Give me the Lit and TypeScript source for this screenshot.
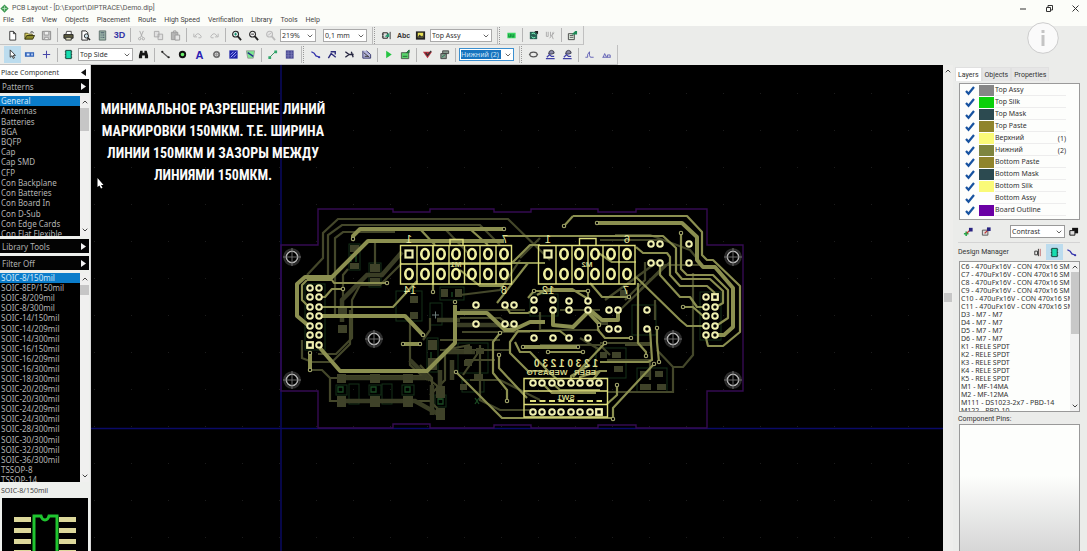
import { LitElement, html, svg, css } from "lit";
import { customElement, state } from "lit/decorators.js";
import { classMap } from "lit/directives/class-map.js";

const icon = (name: string) => html`<svg class="icon" viewBox="0 0 12 12" aria-hidden="true">${ICONS[name]}</svg>`;

const ICONS: Record<string, unknown> = {
  logo: svg`<path d="M6 0.5 11.5 6 6 11.5 0.5 6Z" fill="#3f9a52"/><path d="M3 6h6M6 3v6" stroke="#bfe6c4" stroke-width="1"/>`,
  file: svg`<path d="M3 1.5h4l2.500 2.500v7H3Z" fill="#fff" stroke="#333"/><path d="M7 1.500v2.500h2.500" fill="none" stroke="#333"/>`,
  open: svg`<path d="M1 10V3.500h3l1 1h4V6" fill="#d8cf63" stroke="#55501a"/><path d="M1 10 3 6h8.500L9.500 10Z" fill="#8b8a2c" stroke="#33310e"/><path d="M7 2.500q2-1.500 3.500 0.500" fill="none" stroke="#222"/>`,
  save: svg`<path d="M1.500 1.500h9v9h-9Z" fill="#c9c9c9" stroke="#888"/><path d="M3.500 1.500h5v4h-5ZM4 8h4v2.500H4Z" fill="#eee" stroke="#999"/>`,
  print: svg`<path d="M3 5 4 1.500h5L9 5" fill="#fff" stroke="#444"/><path d="M1 5h10v4H1Z" fill="#5c5c3c" stroke="#222"/><path d="M3 8h6v3H3Z" fill="#d8d8b8" stroke="#333"/>`,
  preview: svg`<path d="M2 1h4.500l2 2v8H2Z" fill="#fff" stroke="#222"/><circle cx="7" cy="6.500" r="2.300" fill="#cfe3ea" stroke="#222"/><path d="m8.500 8.500 2.500 2.500" stroke="#222" stroke-width="1.500"/>`,
  calc: svg`<path d="M2.500 1h7v10h-7Z" fill="#9cb5a9" stroke="#5d6f6a"/><path d="M4 3h4M4 5.500h1M6 5.500h2M4 8h1M6 8h2" stroke="#456"/>`,
  cut: svg`<path d="m4 1 3 7M8 1 5 8" stroke="#aaa" fill="none"/><circle cx="4" cy="9.500" r="1.300" fill="none" stroke="#aaa"/><circle cx="8" cy="9.500" r="1.300" fill="none" stroke="#aaa"/>`,
  copy: svg`<path d="M1.500 1.500h5v6h-5ZM5.500 4.500h5v6h-5Z" fill="#e0e0e0" stroke="#aaa"/>`,
  paste: svg`<path d="M1.500 2.500h7v8h-7Z" fill="#b5b5b5" stroke="#999"/><path d="M4 1h2.500v2H4ZM5.500 5.500h5v5.500h-5Z" fill="#e4e4e4" stroke="#999"/>`,
  undo: svg`<path d="M3 7Q6 2 9 5.500T7 8.500M2 4v3.500h3.500" fill="none" stroke="#b4b4b4"/>`,
  redo: svg`<path d="M9 7Q6 2 3 5.500T5 8.500M10 4v3.500H6.500" fill="none" stroke="#b4b4b4"/>`,
  zoomIn: svg`<circle cx="5" cy="4.500" r="3.200" fill="#e6f0ee" stroke="#222" stroke-width="1.200"/><path d="m7.500 7 3.500 4" stroke="#222" stroke-width="2"/><path d="M3.500 4.500h3M5 3v3" stroke="#086"/>`,
  zoomOut: svg`<circle cx="5" cy="4.500" r="3.200" fill="#f3f3f3" stroke="#222" stroke-width="1.200"/><path d="m7.500 7 3.500 4" stroke="#222" stroke-width="2"/><path d="M3.500 4.500h3" stroke="#222"/>`,
  zoomOff: svg`<circle cx="5" cy="4.500" r="3.200" fill="#e6e6e6" stroke="#bbb" stroke-width="1.200"/><path d="m7.500 7 3.500 4" stroke="#bbb" stroke-width="2"/><path d="m3.500 5.500 3-2" stroke="#bbb"/>`,
  place: svg`<path d="M2 3h5v6H2Z" fill="#ddd" stroke="#222"/><path d="M1 4.500h2M1 7.500h2M10 2v8" stroke="#333"/><path d="m4 7 5-4v5Z" fill="#2a9c74"/>`,
  image: svg`<path d="M1 1.500h10v9H1Z" fill="#222"/><path d="M3 3h6v5H3Z" fill="#e7e056"/><path d="m3 8 2-3 2 2 1-1 1 2Z" fill="#333"/>`,
  chip3: svg`<path d="M1.500 3h9v6h-9Z" fill="#37d65f"/><path d="M3 4.500v3h2v-3M6.500 4.500v3h2v-3" fill="none" stroke="#11863a"/>`,
  refresh: svg`<path d="M2 2h8v8H2Z" fill="#276154"/><path d="M4 4q3-2 4 1M8 8Q5 10 4 7" fill="none" stroke="#7dffc0"/><path d="M7 1h4v4Z" fill="#222"/>`,
  grayx: svg`<path d="M1.500 2v5h2V2M6 2v5M9 2q-3 4 0 8M5 9l5-6" fill="none" stroke="#aaa"/>`,
  export: svg`<path d="M1.500 4h6.500v6.500H1.500Z" fill="#dce8dc" stroke="#444"/><path d="M3 6h4M3 8h4" stroke="#555"/><path d="M5 5 9 1h2v4Z" fill="#1d8a56"/>`,
  arrow: svg`<path d="M3.500 1v8l2-1.700 1.300 3 1.300-.600L6.800 7h2.400Z" fill="#fff" stroke="#222" stroke-width=".9"/>`,
  comp: svg`<path d="M1 3.500h10v5H1Z" fill="#3567bb"/><path d="M3 5h3v2H3ZM8 5h1.500v2H8Z" fill="#dce8ff"/>`,
  origin: svg`<path d="M6 2v8M2 6h8" stroke="#4747a8" stroke-width="1.100"/>`,
  ic: svg`<path d="M3 1.500h6v9H3Z" fill="#16ddb0" stroke="#143f35"/><path d="M2 3h1M2 6h1M2 9h1M9 3h1M9 6h1M9 9h1" stroke="#143f35"/>`,
  find: svg`<path d="M2.500 2h2.500v2h2V2h2.500l1.500 5v3H7.500V7h-3v3H1V7Z" fill="#161616"/>`,
  track: svg`<path d="m2 3 7 6" stroke="#555" stroke-width="1.200"/><circle cx="2.500" cy="3" r="1.200" fill="#222"/><circle cx="9.500" cy="9" r="1.200" fill="#222"/>`,
  via: svg`<circle cx="6" cy="6" r="3" fill="#6df06d" stroke="#111" stroke-width="2"/>`,
  hole: svg`<circle cx="6" cy="6" r="3" fill="#ccc" stroke="#666" stroke-width="1.700"/><path d="M6 2v8M2 6h8" stroke="#888" stroke-width=".6"/>`,
  pour: svg`<path d="M1.500 1.500h9v9h-9Z" fill="#1b20a8"/><path d="m3 9 6-6M3 6l3-3M6 9l3-3" stroke="#aeb6ff"/>`,
  shape: svg`<path d="M1.500 2h9L9 10H3Z" fill="#7ce890" stroke="#9a9a9a"/><path d="m3 4 6 4" stroke="#22308a" stroke-width="1.500"/>`,
  dim: svg`<path d="m3 9 6-6" stroke="#2e8d5c"/><path d="M1.500 8h3v3h-3ZM8 1.500h3v3H8Z" fill="#2ea66b"/>`,
  grid: svg`<path d="M2 1.500h8.500v9H2Z" fill="#4a4a94"/><path d="M4.500 2v8M8 2v8M2 4.500h8M2 7.500h8" stroke="#8d8dc8" stroke-width=".6"/>`,
  route1: svg`<path d="m1.500 3 3 1.500 2 3 4 1.500" fill="none" stroke="#3434ac" stroke-width="1.400"/><circle cx="10" cy="9" r="1.200" fill="#3434ac"/>`,
  route2: svg`<path d="m1.500 10 3-5 5 4M4 3h5v3" fill="none" stroke="#2c2c7c" stroke-width="1.500"/>`,
  route3: svg`<path d="m1.500 3 4 3h5M1.500 9l4-3M8 3l2 6" fill="none" stroke="#24243e" stroke-width="1.400"/>`,
  route4: svg`<path d="M2 2v8h8.500V6L6 2" fill="#b5b5dc" stroke="#33336a"/><path d="m3 4 6 5M4 8h4" stroke="#333"/>`,
  play: svg`<path d="m3.500 2 6 4-6 4Z" fill="#25c443"/>`,
  auto: svg`<path d="M1.500 4h8v6.500h-8Z" fill="#59d46b" stroke="#4c5a4c"/><path d="M3 8h5M7 4l3-3v3Z" stroke="#263" fill="#285"/>`,
  drc: svg`<path d="M1 3h10L6 10Z" fill="#b9303e"/><path d="m4 4 2 3 4-5" fill="none" stroke="#333" stroke-width="1.300"/>`,
  net: svg`<path d="M4 2h6.500v3H4ZM2 5h6v5.500H2Z" fill="#8a9a8e" stroke="#444"/><path d="m3 9 4-3" stroke="#1b7c50"/>`,
  ring: svg`<path d="M2 6q0-2.500 4-2.500T10 6 6 8.500 2 6Z" fill="none" stroke="#555" stroke-width="1.300"/><path d="M1 6h1.500M9.500 6H11" stroke="#555"/>`,
  diff: svg`<path d="M4 5.500q0-4 3-4t3 3L7.500 5.500Z" fill="#8c8caa" stroke="#353545"/><path d="M1 10.500h9.500M2 9l3-3 2 2h3" fill="none" stroke="#4040a8" stroke-width="1.300"/>`,
  wave: svg`<path d="M1.500 9h2.500V6l2-3v4l1 2h3.500" fill="none" stroke="#5d5db4"/>`,
  wave2: svg`<path d="M1.500 9h9M2.500 9 4 5l2 4M7 9V6.500h3V9" fill="none" stroke="#5d5db4"/>`,
  brush: svg`<path d="M3.500 6v5M1 8.500h5" stroke="#27a84b" stroke-width="1.800"/><path d="m4 8 3-3" stroke="#b33" stroke-width="1.400"/><path d="M6.500 2h4v4h-4Z" fill="#2b2482"/>`,
  brush2: svg`<path d="M1.500 4.500h6V10h-6Z" fill="#ddd" stroke="#555"/><path d="m4 8 3-3" stroke="#b33" stroke-width="1.400"/><path d="M6.500 1.500h4v4h-4Z" fill="#2b2482"/>`,
  stack: svg`<path d="M4.500 2h6.500v6H4.500Z" fill="#111"/><path d="M2 5h5.500v5H2Z" fill="#ddd" stroke="#111"/>`,
  diode: svg`<path d="M7 2v8M3 4.500h3v4H3Z" fill="none" stroke="#333"/><path d="M9 2v8" stroke="#b66"/>`,
};

type Tool = string | { b: string; cls?: string; on?: boolean } | { sel: string; cls: string; label: string };

const ROW1: Tool[] = [
  "file", "open", "save", "|", "print", "preview", "calc", { b: "3D", cls: "t3d" }, "|", "cut", "copy", "paste", "|",
  "undo", "redo", "|", "zoomIn", "zoomOut", "zoomOff",
  { sel: "219%", cls: "w36", label: "Zoom" }, { sel: "0,1 mm", cls: "w44", label: "Grid size" },
  "||", "place", { b: "Abc", cls: "abc" }, "image", { sel: "Top Assy", cls: "w62", label: "Drawing layer" },
  "||", "chip3", "|", "refresh", "grayx", "|", "export",
];
const ROW2: Tool[] = [
  { b: "arrow", on: true }, "comp", "origin", "|", "ic", { sel: "Top Side", cls: "w56", label: "Side" }, "find", "|",
  "track", "via", { b: "A", cls: "bigA" }, "hole", "pour", "shape", "|", "dim", "grid", "||",
  "route1", "route2", "route3", "route4", "|", "play", "auto", "|", "drc", "net", "|",
  { sel: "Нижний (2)", cls: "w56 active", label: "Route layer" }, "||", "ring", "diff", "diff", "|", "wave", "wave2",
];

const chev = html`<svg class="chev" viewBox="0 0 6 4" aria-hidden="true"><path d="m.7.7 2.300 2.300L5.300.7" fill="none" stroke="#666"/></svg>`;
const combo = (value: string, cls: string, label: string) =>
  html`<span class="combo ${cls}"><select aria-label=${label}><option>${value}</option></select>${chev}</span>`;

const renderTool = (t: Tool) => {
  if (t === "|") return html`<span class="sep"></span>`;
  if (t === "||") return html`<span class="grip"></span>`;
  if (typeof t === "string") return html`<button class="tool" aria-label=${t}>${icon(t)}</button>`;
  if ("sel" in t) return combo(t.sel, t.cls, t.label);
  return html`<button class="tool ${t.cls ?? ""} ${t.on ? "on" : ""}" aria-label=${t.b}>${t.cls ? t.b : icon(t.b)}</button>`;
};

@customElement("pcb-toolbar")
class PcbToolbar extends LitElement {
  static styles = css`
    :host { display: block; color: #333; }
    .row { display: flex; width: max-content; height: 19px; align-items: center; padding-left: 4px; padding-right: 2px;
      border-bottom: 1px solid #c4c4c4; border-right: 1px solid #c0c0c0; box-sizing: border-box; }
    .row + .row { height: 20px; }
    .tool { width: 17px; height: 17px; padding: 0; border: 0; background: none; display: flex; align-items: center; justify-content: center;
      font: bold 8px "Liberation Sans", sans-serif; color: #333; }
    .on { background: #bcdcee; }
    .t3d { color: #3434a6; font-size: 9px; }
    .abc { font-size: 7px; }
    .bigA { color: #2a22b4; font-size: 11px; }
    .icon { width: 11px; height: 11px; }
    .sep { width: 1px; height: 14px; background: #b5b5b5; margin: 0 2px; }
    .grip { width: 1px; height: 17px; border-left: 1px solid #bbb; border-right: 1px dotted #999; margin: 0 3px; }
    .combo { position: relative; display: block; height: 13px; margin: 0 2px 0 1px; }
    .w36 { width: 36px; margin-right: 6px; } .w44 { width: 44px; } .w62 { width: 62px; } .w56 { width: 55px; }
    select { appearance: none; width: 100%; height: 13px; border: 1px solid #aaa; border-radius: 0; background: #fff; padding: 0 1px;
      font: 7px "Noto Sans", sans-serif; color: #333; display: block; }
    .chev { position: absolute; right: 3px; top: 5px; width: 6px; height: 4px; pointer-events: none; }
    .active select { border-color: #3b8fd0; background: linear-gradient(#1874bf, #1874bf) 1px 1px / 40px 9px no-repeat #fff; color: #cfe4f7; }
  `;
  render() {
    return html`<div class="row" role="toolbar">${ROW1.map(renderTool)}</div>
      <div class="row" role="toolbar">${ROW2.map(renderTool)}</div>`;
  }
}

const PATTERNS = ["General", "Antennas", "Batteries", "BGA", "BQFP", "Cap", "Cap SMD", "CFP", "Con Backplane", "Con Batteries",
  "Con Board In", "Con D-Sub", "Con Edge Cards", "Con Flat Flexible"];
const PARTS = ["SOIC-8/150mil", "SOIC-8EP/150mil", "SOIC-8/209mil", "SOIC-8/300mil", "SOIC-14/150mil", "SOIC-14/209mil",
  "SOIC-14/300mil", "SOIC-16/150mil", "SOIC-16/209mil", "SOIC-16/300mil", "SOIC-18/300mil", "SOIC-20/209mil", "SOIC-20/300mil",
  "SOIC-24/209mil", "SOIC-24/300mil", "SOIC-28/300mil", "SOIC-30/300mil", "SOIC-32/300mil", "SOIC-36/300mil", "TSSOP-8", "TSSOP-14"];

const up = html`<svg class="sa" viewBox="0 0 6 4"><path d="m.7 3.300L3 1l2.300 2.300" fill="none" stroke="#444"/></svg>`;
const down = html`<svg class="sa" viewBox="0 0 6 4"><path d="m.7.7L3 3 5.300.7" fill="none" stroke="#444"/></svg>`;

@customElement("pcb-library")
class PcbLibrary extends LitElement {
  @state() group = 0;
  @state() part = 0;
  static styles = css`
    :host { display: flex; flex-direction: column; background: #eef0ed; font: 8px "Noto Sans", sans-serif; color: #b4b4b4;
      border-right: 1px solid #d8d8d8; box-sizing: border-box; overflow: hidden; min-height: 0; }
    .head { display: flex; justify-content: space-between; align-items: center; height: 14px; padding: 0 4px 0 1px; background: #fff; color: #333; font-size: 7px; }
    .tri { width: 5px; height: 7px; }
    .bar { display: flex; justify-content: space-between; align-items: center; flex: none; height: 14px; margin: 0 1px 3px 0; padding: 0 3px 0 2px; border: 0;
      background: #030303; color: #b0b0b0; font: inherit; text-align: left; }
    .box { display: flex; overflow: hidden; margin-right: 1px; margin-bottom: 3px; background: #000; }
    .short { height: 140px; }
    .long { height: 209px; }
    ul { list-style: none; margin: 0 0 -3px; padding: 0; flex: 1; display: flex; flex-direction: column; white-space: nowrap; overflow: hidden; }
    li { flex: 1; min-height: 0; display: flex; align-items: center; padding-left: 1px; line-height: 10px; }
    .sel { background: #0a7cca; color: #cfe8fa; }
    .scroll { width: 9px; background: #f0f0ef; display: flex; flex-direction: column; align-items: center; padding: 4px 0; box-sizing: border-box; }
    .sa { width: 6px; height: 4px; }
    .thumb { width: 9px; background: #c6c6c6; margin-top: 4px; height: 23px; margin-bottom: auto; }
    .long .thumb { height: 10px; }
    .name { color: #444; font-size: 7px; height: 13px; line-height: 12px; padding-left: 1px; }
    .preview { flex: 1; background: #000; margin: 0 2px; min-height: 0; overflow: hidden; display: flex; justify-content: center; }
    .preview svg { width: 86px; height: 90px; flex: none; }
  `;
  list(items: string[], active: number, cls: string, pick: (i: number) => void) {
    return html`<div class="box ${cls}">
      <ul role="listbox">${items.map((t, i) => html`<li role="option" aria-selected=${i === active} class=${classMap({ sel: i === active })} @click=${() => pick(i)}>${t}</li>`)}</ul>
      <div class="scroll">${up}<span class="thumb"></span>${down}</div></div>`;
  }
  bar(t: string) {
    return html`<button class="bar">${t}<svg class="tri" viewBox="0 0 5 7"><path d="M0 0v7l5-3.500Z" fill="#f4f4f4"/></svg></button>`;
  }
  render() {
    return html`
      <div class="head">Place Component<svg class="tri" viewBox="0 0 5 7"><path d="M5 0v7L0 3.500Z" fill="#111"/></svg></div>
      ${this.bar("Patterns")}
      ${this.list(PATTERNS, this.group, "short", (i) => (this.group = i))}
      ${this.bar("Library Tools")}${this.bar("Filter Off")}
      ${this.list(PARTS, this.part, "long", (i) => (this.part = i))}
      <div class="name">SOIC-8/150mil</div>
      <div class="preview"><svg viewBox="0 0 86 90">
        ${[19, 30, 41, 52].map((y) => svg`<path d="M12 ${y}h17v5h-17ZM57 ${y}h17v5h-17Z" fill="#dcd79a"/>`)}
        <path d="M32 70V18h7q1 4 4 4t4-4h8v52Z" fill="none" stroke="#1fc42f" stroke-width="3"/></svg></div>`;
  }
}

const BRIGHT = [
  "M573 216H687L702 232V255L707 260H713L740 286V332L723 346H708L706 338", "M573 216 564 226",
  "M307 280H332L334 283H387", "M307 280 302 285V300L309 307", "M320 297H325L332 289H343", "M320 307H393L417 281",
  "M504 236H663L676 248V272L682 279H710L723 291V303L716 307", "M636 247 643 253H667L670 257V275L680 286H707L715 293",
  "M681 233V269L687 275H713L728 290V318L716 326", "M660 263V275L680 297H690L697 307H706", "M683 307H693L703 316",
  "M636 277 680 320 687 326H706", "M638 283V343L646 352V356", "M590 283 602 297H629", "M512 263 530 245H540", "M497 303 528 263H545",
  "M500 333 493 342V373L507 390V401", "M499 355V368L527 398", "M456 372 502 418H613", "M534 331H518L510 342V353L530 373",
  "M515 342 520 352H530L548 371", "M548 352H583", "M605 343 573 377", "M657 328V342L659 362", "M654 364 613 408V419",
  "M617 385V395L607 404", "M650 329 652 360 648 362H600", "M631 338H605L598 330V322", "M534 331H560L569 338", "M433 245V292",
  "M534 291H588V300M534 291 528 298M537 295 548 289H572L588 299", "M505 305 510 313H528L534 310", "M430 263H540M460 270 480 286H504",
  "M542 383 552 393H596M552 383 560 390H600M571 383V376L590 365M561 383 548 371H530M580 383V377L600 371M590 383 600 371H607",
  "M420 229 435 245M470 229 488 245M594 250 612 262 636 262",
];
const HEAVY = [
  "M353 239V236L360 229H504", "M597 223H682L697 237V260L703 267H715L733 288V327L724 335H715",
  "M504 241H368L332 277H305L297 284V316L309 326", "M320 316H405L423 335", "M320 348 340 371H427L455 343V305", "M310 353V369", "M403 344H420",
  "M455 313H487L505 330H513L530 322H545M553 310V325L573 327 588 312L600 325", "M523 347H578", "M590 310 602 320H618V312",
];
const DIM = [
  "M307 275 323 258V233L338 219H508L550 260", "M328 275V235L342 225H480L500 245", "M335 318V238L343 232H395", "M375 242V264",
  "M348 269 343 275V300", "M402 263 380 285H360L352 300V338L336 354H318", "M310 370H322L330 378V401H430L440 411",
  "M302 340V358L312 362H332L350 344V310", "M445 229 470 255M540 238 520 258M430 318V330L423 340M410 320V365L427 380",
  "M693 340V355L683 367H673L657 350M673 367V392H608", "M460 310H525M460 318H500L515 330M462 332H530M440 340H500M440 350H490",
  "M463 375 480 350H510M470 380H500L540 400M480 345V400L500 410H530M465 360H495M430 395 445 380V350L470 345",
  "M540 312V330H600M560 310H600M605 300 660 260M620 310 670 262M625 345H650M600 343H650M580 338 600 350M540 345H600L610 355",
  "M693 273V340M645 262V280L625 300M655 300V320M607 360H650V380M600 240 660 240M640 290 665 265H700M460 295 500 290 520 260",
  "M330 378H345M337 376H425L440 388M420 365 432 378V400M700 262 690 250 650 235H615",
];
const DIMHEAVY = ["M402 252 382 275H367L342 300V322", "M340 378H425M340 401H415L440 415", "M410 360 430 380M437 320H460M455 325H500M440 370V400", "M432 385V415M447 352H475M452 360V380"];

const DIMPADS: number[][] = [
  [350, 245, 9, 7], [350, 263, 9, 6], [370, 264, 10, 8], [370, 278, 10, 7], [338, 308, 9, 9], [338, 325, 9, 8],
  [337, 374, 9, 9], [337, 396, 9, 11], [370, 374, 10, 9], [370, 396, 10, 11], [403, 374, 10, 9], [403, 396, 10, 11],
  [436, 386, 9, 12], [436, 408, 9, 12], [428, 340, 9, 10], [428, 358, 9, 12], [455, 289, 7, 8], [441, 289, 7, 8], [410, 296, 8, 7], [410, 312, 8, 7],
  [464, 346, 8, 8], [476, 348, 8, 6], [464, 360, 8, 6], [474, 374, 9, 5], [460, 384, 7, 6], [600, 352, 7, 6], [612, 352, 9, 6], [614, 366, 9, 6],
  [640, 371, 9, 6], [655, 371, 8, 6], [640, 384, 11, 6], [657, 384, 9, 6], [620, 290, 8, 6], [600, 318, 8, 7],
];
const GREENS: number[][] = [
  [349, 244, 11, 26], [369, 263, 12, 24], [336, 385, 11, 10], [369, 385, 12, 10], [402, 385, 12, 10], [435, 395, 11, 12], [427, 338, 11, 34],
  [440, 287, 24, 13], [396, 291, 26, 30], [430, 303, 12, 22], [458, 343, 30, 30], [462, 380, 22, 12], [596, 348, 30, 30], [637, 368, 30, 24], [349, 384, 10, 20],
  [382, 384, 10, 20], [305, 284, 20, 66], [530, 294, 28, 22], [632, 305, 24, 30], [700, 292, 21, 48],
];
const ROUND: number[][] = [
  [476, 305], [505, 305], [514, 305], [534, 300], [534, 310], [553, 300], [553, 310], [569, 301], [569, 310], [588, 301], [588, 310],
  [651, 244], [660, 244], [651, 263], [660, 263], [689, 244], [689, 263], [609, 310], [618, 310], [647, 310], [609, 329], [618, 329], [647, 329],
  [476, 324], [505, 324], [514, 324], [534, 338], [553, 338], [569, 338], [588, 338],
  ...[288, 297, 307, 316, 326, 335, 345].flatMap((y) => [[310, y], [319, y]]).filter(([x, y]) => !(x === 310 && y === 345)),
  ...[297, 307, 316, 326, 335].flatMap((y) => [[706, y], [715, y]]).filter(([x, y]) => !(x === 715 && y === 297)),
];
const VIAS: number[][] = [
  [353, 239], [387, 283], [343, 289], [504, 229], [564, 226], [597, 223], [681, 233], [683, 307], [646, 356], [629, 297], [423, 335], [310, 353],
  [310, 370], [403, 344], [420, 344], [500, 333], [507, 401], [499, 355], [456, 372], [523, 347], [578, 347], [548, 352], [583, 352], [605, 343],
  [657, 328], [659, 362], [654, 364], [613, 419], [617, 385], [631, 338], [433, 292], [534, 291], [588, 291], [455, 302], [599, 325],
];
const PINS1 = [409, 425, 441, 456, 472, 488, 504];
const PINS2 = [548, 564, 579, 595, 611, 627];
const PINS3 = [533, 542, 552, 561, 571, 580, 590, 599];
const oval = (x: number, y: number) => svg`<ellipse cx=${x} cy=${y} rx="3.700" ry="5" fill="#000" stroke="#f0f0a0" stroke-width="2.600"/>`;
const ring = (x: number, y: number) => svg`<circle cx=${x} cy=${y} r="2.800" fill="#000" stroke="#f0f0b0" stroke-width="2"/>`;
const square = (x: number, y: number, r = 2.8) => svg`<rect x=${x - r} y=${y - r} width=${2 * r} height=${2 * r} fill="#000" stroke="#f0f0b0" stroke-width="2.200"/>`;
const mirrored = (x: number, y: number, t: string, cls = "silk") => svg`<text class=${cls} transform="translate(${x} ${y}) scale(-1 1)" text-anchor="middle">${t}</text>`;

@customElement("pcb-canvas")
class PcbCanvas extends LitElement {
  static styles = css`
    :host { display: block; position: relative; background: #000; overflow: hidden; min-width: 0; min-height: 0; }
    .board { display: block; width: 100%; height: 100%; }
    .silk { font: 11px "Liberation Sans", sans-serif; fill: #eeeea0; }
    .digits { font: bold 10px "Liberation Sans", sans-serif; fill: #dede90; }
    .small { font: bold 8px "Liberation Sans", sans-serif; fill: #d4d488; }
    .caption { position: absolute; left: 2px; top: 33px; width: 240px; margin: 0; text-align: center; white-space: pre; color: #fafafa;
      font: bold 14px/22px "Roboto Condensed", "Liberation Sans Narrow", sans-serif; text-transform: uppercase; }
  `;
  render() {
    return html`<svg class="board" viewBox="91 65 852 486" preserveAspectRatio="xMidYMid slice" role="img" aria-label="Demo.dip">
      <defs><pattern id="dots" x="168" y="204" width="37" height="37" patternUnits="userSpaceOnUse"><rect width="1" height="1" fill="#1c1c1c"/></pattern></defs>
      <rect x="91" y="65" width="852" height="486" fill="url(#dots)"/>
      <path d="M281 65V551M91 428.500H943" stroke="#0a0a68" stroke-width="1.400"/>
      <path d="M281 245H318V209H393V212H430V209H494V212H531V209H598V212H636V209H707V245H743V391H707V428H636V425H598V428H531V425H494V428H430V424H393V428H318V391H281Z"
        fill="none" stroke="#350b52" stroke-width="1.400"/>
      <g fill="none" stroke="#143018" stroke-width="1">${GREENS.map(([x, y, w, h]) => svg`<rect x=${x} y=${y} width=${w} height=${h}/>`)}</g>
      <g fill="none" stroke="#44472a" stroke-width="2.200">${DIM.map((d) => svg`<path d=${d}/>`)}</g>
      <g fill="none" stroke="#3a3d25" stroke-width="4.500">${DIMHEAVY.map((d) => svg`<path d=${d}/>`)}</g>
      <g fill="#3f4229">${DIMPADS.map(([x, y, w, h]) => svg`<rect x=${x} y=${y} width=${w} height=${h}/>`)}</g>
      <g fill="none" stroke="#1a4a22" stroke-width="1.300"><path d="M338 387h5v5h-5ZM371 387h5v5h-5ZM405 387h5v5h-5ZM438 399h5v5h-5ZM351 254v8M356 254v8M431 352v6M475 398l4 6M475 404l4-6M452 292v5"/></g>
      <g fill="none" stroke="#8b8f50" stroke-width="2.200" stroke-linejoin="round">${BRIGHT.map((d) => svg`<path d=${d}/>`)}</g>
      <g fill="none" stroke="#8b8f50" stroke-width="4" stroke-linejoin="round">${HEAVY.map((d) => svg`<path d=${d}/>`)}</g>
      ${VIAS.map(([x, y]) => svg`<circle cx=${x} cy=${y} r="1.700" fill="#000" stroke="#a3a66c" stroke-width="1.100"/>`)}
      <g fill="none" stroke="#dede7c" stroke-width="1.400">
        <path d="M400.500 245.500H511.500V284H400.500ZM400.500 264H511.500M417 245V284M433 245V284M449 245V284M464.500 245V284M480 245V284M496 245V284M450 245V239.500H463V245"/>
        <path d="M538.500 245.500H635V284H538.500ZM556 245V284M572 245V284M588 245V284M603 245V284M619 245V284M579.500 245V238.500H596V245"/>
        <path d="M524 378.500H607.500V417H524ZM524 391H607.500M524 404.500H607.500"/><path d="M530 401H602" stroke-dasharray="6 3.500" stroke-width="2"/>
      </g>
      ${PINS1.map((x, i) => [i ? oval(x, 254) : square(x, 254, 3.5), oval(x, 274)])}
      ${PINS2.map((x, i) => [i ? oval(x, 254) : square(x, 254, 3.5), oval(x, 274)])}
      ${PINS3.map((x, i) => [ring(x, 383), i === 7 ? square(x, 412) : ring(x, 412)])}
      ${ROUND.map(([x, y]) => ring(x, y))}${square(310, 345)}${square(715, 297)}
      ${mirrored(409, 243, "1")}${mirrored(505, 243, "7")}${mirrored(410, 294, "14")}${mirrored(504, 294, "8")}
      ${mirrored(548, 243, "1")}${mirrored(627, 243, "6")}${mirrored(548, 294, "12")}${mirrored(626, 294, "7")}
      ${mirrored(566, 367, "1 2 3 0 1 2 3 0", "digits")}${mirrored(585, 375, "EBER", "small")}${mirrored(547, 375, "WEBASTO", "small")}
      ${mirrored(566, 400, "SW1", "small")}${mirrored(456, 267, "M1", "small")}${mirrored(587, 267, "M2", "small")}
      ${[[292, 257], [292, 380], [374, 339], [673, 339], [733, 257], [733, 380]].map(([x, y]) => svg`<g fill="none">
        <circle cx=${x} cy=${y} r="7.800" stroke="#2e2e2e" stroke-width="2"/><circle cx=${x} cy=${y} r="5.700" stroke="#b5b5b5" stroke-width="1.500"/>
        <path d="M${x - 9} ${y}h18M${x} ${y - 9}v18" stroke="#777" stroke-width=".9"/></g>`)}
      <path d="M432 315h7M435.500 311.500v7" stroke="#6a7a78"/>
      <path d="M97.500 178v9l2-1.500 1.500 3 1.500-.8-1.500-2.700h2.500Z" fill="#fff"/>
    </svg>
    <p class="caption">${"Минимальное разрешение линий\nмаркировки 150мкм. Т.е. ширина\nлинии 150мкм и зазоры между\nлиниями 150мкм."}</p>`;
  }
}

const LAYERS: [string, string, string][] = [
  ["Top Assy", "#868686", ""], ["Top Silk", "#0ad00a", ""], ["Top Mask", "#2c4a50", ""], ["Top Paste", "#8f842c", ""],
  ["Верхний", "#fafa78", "(1)"], ["Нижний", "#7e853f", "(2)"], ["Bottom Paste", "#8f842c", ""], ["Bottom Mask", "#2c4a50", ""],
  ["Bottom Silk", "#fafa78", ""], ["Bottom Assy", "#fdfdfd", ""], ["Board Outline", "#6a00a4", ""],
];
const DESIGN = ["C6 - 470uFx16V - CON 470x16 SMD", "C7 - 470uFx16V - CON 470x16 SMD", "C8 - 470uFx16V - CON 470x16 SMD",
  "C9 - 470uFx16V - CON 470x16 SMD", "C10 - 470uFx16V - CON 470x16 SMD", "C11 - 470uFx16V - CON 470x16 SMD", "D3 - M7 - M7", "D4 - M7 - M7",
  "D5 - M7 - M7", "D6 - M7 - M7", "K1 - RELE SPDT", "K2 - RELE SPDT", "K3 - RELE SPDT", "K4 - RELE SPDT", "K5 - RELE SPDT", "M1 - MF-14MA",
  "M2 - MF-12MA", "M111 - DS1023-2x7 - PBD-14", "M122 - PBD-10"];

@customElement("pcb-manager")
class PcbManager extends LitElement {
  static styles = css`
    :host { display: flex; flex-direction: column; padding: 2px 7px 0 5px; box-sizing: border-box; font: 7px "Noto Sans", sans-serif; color: #333; min-height: 0; overflow: hidden; }
    button { font: inherit; color: inherit; border: 0; background: none; padding: 0; }
    .tabs { display: flex; height: 14px; align-items: stretch; font-family: Roboto, sans-serif; margin-left: -3px; }
    .tabs button { padding: 0 2px; background: #e6e6e6; border: 1px solid #e0e0e0; border-bottom: 0; }
    .tabs .cur { background: #fff; }
    .layers { background: #fdfefc; border: 1px solid #9a9a9a; height: 137px; box-sizing: border-box; padding: 0 9px 0 4px; margin: 2px 0 0 1px; }
    .layer { display: grid; grid-template-columns: 15px 16px 1fr auto; align-items: center; height: 12px; }
    .layer span:nth-of-type(2) { border-bottom: 1px solid #ededed; line-height: 11px; }
    .num { padding-right: 4px; }
    input { appearance: none; width: 12px; height: 11px; margin: 0;
      background: url("data:image/svg+xml,%3Csvg xmlns='http://www.w3.org/2000/svg' viewBox='0 0 12 11'%3E%3Cpath d='m2 6 2.500 2.800L10 2' fill='none' stroke='%231753a0' stroke-width='2.200'/%3E%3C/svg%3E"); }
    .sw { width: 15px; height: 11px; }
    .row { display: flex; align-items: center; height: 22px; padding: 0 1px 0 1px; }
    .row button { width: 18px; height: 14px; }
    .row .last { width: 11px; }
    .icon { width: 11px; height: 11px; display: block; margin: auto; }
    .combo { position: relative; width: 55px; margin-left: auto; margin-right: 3px; }
    select { appearance: none; width: 100%; height: 13px; border: 1px solid #999; border-radius: 0; background: #fff; padding: 0 1px; font: inherit; color: inherit; display: block; }
    .chev { position: absolute; right: 3px; top: 5px; width: 6px; height: 4px; pointer-events: none; }
    .dm { display: flex; align-items: center; height: 18px; border-top: 1px solid #d4d4d4; }
    .dm span { flex: 1; font-family: Roboto, sans-serif; }
    .dm button { width: 17px; height: 16px; }
    .dm .on { background: #bcdcee; }
    .list { display: flex; height: 151px; box-sizing: border-box; border: 1px solid #999; background: #fdfefc; margin-left: 1px; overflow: hidden; }
    ul { list-style: none; margin: 0; padding: 1px 0 0 1px; flex: 1; white-space: nowrap; overflow: hidden; }
    li { line-height: 8px; height: 8px; }
    .scroll { width: 9px; background: #f2f2f2; display: flex; flex-direction: column; align-items: center; padding: 3px 0; box-sizing: border-box; }
    .sa { width: 6px; height: 4px; }
    .thumb { width: 8px; height: 62px; background: #c8c8c8; margin: 3px 0 auto; }
    .pins { height: 12px; line-height: 14px; font-family: Roboto, sans-serif; }
    .box { flex: 1; border: 1px solid #999; border-bottom: 0; margin-left: 1px; background: linear-gradient(#fdfefc 40%, #d6d6d6); }
  `;
  render() {
    return html`
      <div class="tabs" role="tablist"><button role="tab" class="cur">Layers</button><button role="tab">Objects</button><button role="tab">Properties</button></div>
      <div class="layers">${LAYERS.map(([n, c, num]) => html`<label class="layer"><input type="checkbox" checked><span class="sw" style="background:${c}"></span><span>${n}</span><span class="num">${num}</span></label>`)}</div>
      <div class="row"><button aria-label="Layer colour">${icon("brush")}</button><button aria-label="Layer setup">${icon("brush2")}</button>
        <span class="combo"><select aria-label="Display mode"><option>Contrast</option></select>${chev}</span><button class="last" aria-label="Stack">${icon("stack")}</button></div>
      <div class="dm"><span>Design Manager</span><button aria-label="Sort">${icon("diode")}</button><button class="on" aria-label="Components">${icon("ic")}</button><button aria-label="Nets">${icon("route1")}</button></div>
      <div class="list"><ul role="listbox" aria-label="Components">${DESIGN.map((d) => html`<li role="option">${d}</li>`)}</ul>
        <div class="scroll">${up}<span class="thumb"></span>${down}</div></div>
      <div class="pins">Component Pins:</div><div class="box"></div>`;
  }
}

@customElement("app-root")
class AppRoot extends LitElement {
  static styles = css`
    :host { display: flex; flex-direction: column; height: 100vh; overflow: hidden; background: #ebecea; font: 7px Roboto, sans-serif; color: #333; }
    .title { display: flex; align-items: center; height: 15px; background: #fcfdf9; padding: 1px 8px 0 0; box-sizing: border-box; color: #555; }
    .title .icon { width: 9px; height: 9px; margin-right: 3px; }
    .title span { flex: 1; }
    .win { border: 0; background: none; padding: 0; width: 26px; height: 14px; }
    .win svg { width: 7px; height: 7px; display: block; margin: 0 0 0 auto; }
    nav { display: flex; gap: 8px; height: 11px; line-height: 11px; padding-left: 3px; background: #fcfdf9; }
    nav button { border: 0; background: none; padding: 0; font: inherit; color: #444; }
    main { flex: 1; display: grid; grid-template-columns: 91px minmax(0, 1fr) 10px 134px; min-height: 0; }
    .vscroll { background: #eeeeec; display: flex; flex-direction: column; align-items: center; padding-top: 4px; }
    .sa { width: 6px; height: 4px; }
    .vthumb { width: 8px; height: 9px; background: #c6c6c6; margin: 220px 0 auto; }
    .info { position: absolute; right: 28px; top: 22px; width: 32px; height: 32px; padding: 0; border: 0; background: none; }
    .info svg { display: block; width: 32px; height: 32px; }
  `;
  render() {
    return html`
      <header class="title">${icon("logo")}<span>PCB Layout - [D:\\Export\\DIPTRACE\\Demo.dip]</span>
        <button class="win" aria-label="Minimize"><svg viewBox="0 0 7 7"><path d="M0 4h6" stroke="#333"/></svg></button>
        <button class="win" aria-label="Restore"><svg viewBox="0 0 7 7"><path d="M.5 2.500h4v4h-4ZM2 2V.5h4.500V5H5" fill="none" stroke="#333"/></svg></button>
        <button class="win" aria-label="Close"><svg viewBox="0 0 7 7"><path d="m.5.5 6 6M6.500.5l-6 6" stroke="#333"/></svg></button></header>
      <nav>${["File", "Edit", "View", "Objects", "Placement", "Route", "High Speed", "Verification", "Library", "Tools", "Help"].map((m) => html`<button>${m}</button>`)}</nav>
      <pcb-toolbar></pcb-toolbar>
      <main><pcb-library></pcb-library><pcb-canvas></pcb-canvas>
        <div class="vscroll">${up}<span class="vthumb"></span></div><pcb-manager></pcb-manager></main>
      <button class="info" aria-label="Info"><svg viewBox="0 0 32 32"><circle cx="16" cy="16" r="15.300" fill="#fafafa" stroke="#ccc"/><path d="M14.500 13h3v11h-3ZM14.500 8h3v3h-3Z" fill="#c4c4c4"/></svg></button>`;
  }
}
